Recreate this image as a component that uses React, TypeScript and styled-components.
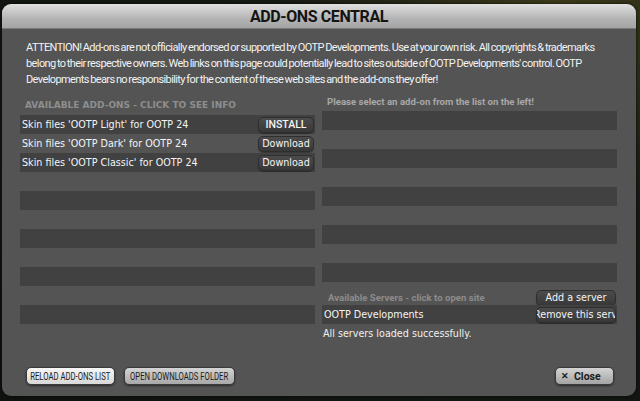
import styled, { createGlobalStyle } from "styled-components";

const GlobalStyle = createGlobalStyle`
  html, body {
    margin: 0;
    padding: 0;
    background: #121512;
  }
  * {
    box-sizing: border-box;
  }
`;

const addons = [
  { name: "Skin files 'OOTP Light' for OOTP 24", action: "INSTALL" },
  { name: "Skin files 'OOTP Dark' for OOTP 24", action: "Download" },
  { name: "Skin files 'OOTP Classic' for OOTP 24", action: "Download" },
];

const LEFT_ROWS = 12;
const RIGHT_ROWS = 9;

const App = () => {
  const leftRows = Array.from({ length: LEFT_ROWS }, (_, i) => addons[i]);

  return (
    <Page>
      <GlobalStyle />
      <Dialog>
        <Header>
          <Title>ADD-ONS CENTRAL</Title>
        </Header>
        <Body>
          <Notice>
            ATTENTION! Add-ons are not officially endorsed or supported by OOTP Developments. Use at your own risk. All
            copyrights &amp; trademarks belong to their respective owners. Web links on this page could potentially lead
            to sites outside of OOTP Developments' control. OOTP Developments bears no responsibility for the content of
            these web sites and the add-ons they offer!
          </Notice>
          <Columns>
            <Column>
              <LeftCaption>AVAILABLE ADD-ONS - CLICK TO SEE INFO</LeftCaption>
              <List>
                {leftRows.map((addon, i) => (
                  <Row key={i} $striped={i % 2 === 0}>
                    {addon && (
                      <>
                        <RowText>{addon.name}</RowText>
                        <RowButton $caps={addon.action === "INSTALL"}>{addon.action}</RowButton>
                      </>
                    )}
                  </Row>
                ))}
              </List>
            </Column>
            <Column>
              <RightCaption>Please select an add-on from the list on the left!</RightCaption>
              <List>
                {Array.from({ length: RIGHT_ROWS }, (_, i) => (
                  <Row key={i} $striped={i % 2 === 0} />
                ))}
              </List>
              <ServersHead>
                <ServersLabel>Available Servers - click to open site</ServersLabel>
                <ServerButton>
                  <span>Add a server</span>
                </ServerButton>
              </ServersHead>
              <Row $striped>
                <RowText>OOTP Developments</RowText>
                <ServerButton $overflow>
                  <span>Remove this server</span>
                </ServerButton>
              </Row>
              <Status>All servers loaded successfully.</Status>
            </Column>
          </Columns>
          <Footer>
            <FooterButton $tone="light" $width={89}>
              <Condensed>RELOAD ADD-ONS LIST</Condensed>
            </FooterButton>
            <FooterButton $tone="mid" $width={111}>
              <Condensed>OPEN DOWNLOADS FOLDER</Condensed>
            </FooterButton>
            <Spacer />
            <CloseButton>
              <CloseMark>✕</CloseMark>
              Close
            </CloseButton>
          </Footer>
        </Body>
      </Dialog>
    </Page>
  );
};

export default App;

const Page = styled.div`
  width: 640px;
  height: 401px;
  padding: 4px 4px 5px 2px;
  background: radial-gradient(ellipse at 88% 0%, #3c3a1a 0%, #161a14 35%, #0f120f 100%);
  overflow: hidden;
`;

const Dialog = styled.div`
  height: 100%;
  display: flex;
  flex-direction: column;
  border-radius: 9px;
  overflow: hidden;
  background: #545454;
  box-shadow: 0 0 3px rgba(0, 0, 0, 0.8);
`;

const Header = styled.header`
  height: 25px;
  flex: none;
  display: flex;
  align-items: center;
  justify-content: center;
  background: linear-gradient(#e0e0e0, #b4b4b4 60%, #a4a4a4);
  border-bottom: 1px solid #7a7a7a;
`;

const Title = styled.h1`
  margin: 0;
  font-family: Roboto, "Liberation Sans", sans-serif;
  font-size: 16px;
  font-weight: 700;
  letter-spacing: -0.4px;
  color: #141414;
`;

const Body = styled.main`
  flex: 1;
  display: flex;
  flex-direction: column;
  padding: 11px 19px 11px 18px;
`;

const Notice = styled.p`
  margin: 0 -8px 0 6px;
  font-family: Roboto, "Liberation Sans", sans-serif;
  font-size: 11px;
  letter-spacing: -0.6px;
  word-spacing: -0.8px;
  line-height: 16px;
  color: #f2f2f2;
`;

const Columns = styled.section`
  margin-top: 6px;
  display: flex;
  gap: 7px;
`;

const Column = styled.div`
  flex: 1;
  display: flex;
  flex-direction: column;
`;

const LeftCaption = styled.div`
  height: 21px;
  padding: 4px 0 0 5px;
  font-family: "DejaVu Sans", sans-serif;
  font-size: 9px;
  font-weight: 700;
  color: #8e8e8e;
  line-height: 14px;
  white-space: nowrap;
`;

const RightCaption = styled.div`
  height: 17px;
  padding: 1px 0 0 5px;
  font-family: Roboto, "Liberation Sans", sans-serif;
  font-size: 9.6px;
  font-weight: 700;
  color: #a8a8a8;
  line-height: 14px;
  white-space: nowrap;
`;

const List = styled.div`
  display: flex;
  flex-direction: column;
`;

const Row = styled.div<{ $striped?: boolean }>`
  height: 19px;
  display: flex;
  align-items: center;
  justify-content: space-between;
  padding: 0 1px 0 2px;
  background: ${(p) => (p.$striped ? "#414141" : "transparent")};
`;

const RowText = styled.span`
  font-family: "DejaVu Sans", sans-serif;
  font-size: 9.6px;
  color: #f4f4f4;
  white-space: nowrap;
`;

const RowButton = styled.button<{ $caps?: boolean }>`
  width: 56px;
  height: 16px;
  padding: 0;
  border: 1px solid #2e2e2e;
  border-radius: 5px;
  background: linear-gradient(#4c4c4c, #383838);
  box-shadow: 0 1px 1px rgba(0, 0, 0, 0.35);
  font-family: ${(p) => (p.$caps ? 'Roboto, "Liberation Sans", sans-serif' : '"DejaVu Sans", sans-serif')};
  font-size: ${(p) => (p.$caps ? "10.5px" : "9.6px")};
  font-weight: ${(p) => (p.$caps ? 500 : 400)};
  color: #f4f4f4;
`;

const ServersHead = styled.div`
  margin-top: 8px;
  height: 15px;
  display: flex;
  align-items: center;
  justify-content: space-between;
  padding: 0 1px 0 6px;
`;

const ServersLabel = styled.span`
  font-family: Roboto, "Liberation Sans", sans-serif;
  font-size: 9.6px;
  color: #8c8c8c;
  font-weight: 700;
`;

const ServerButton = styled.button<{ $overflow?: boolean }>`
  width: 80px;
  height: 16px;
  flex: none;
  display: flex;
  align-items: center;
  justify-content: ${(p) => (p.$overflow ? "flex-start" : "center")};
  padding: 0;
  border: 1px solid #2e2e2e;
  border-radius: 5px;
  background: linear-gradient(#4c4c4c, #383838);
  box-shadow: 0 1px 1px rgba(0, 0, 0, 0.35);
  font-family: "DejaVu Sans", sans-serif;
  font-size: 9.6px;
  color: #f4f4f4;
  white-space: nowrap;
  overflow: hidden;

  span {
    flex: none;
    margin-left: ${(p) => (p.$overflow ? "-3px" : "0")};
  }
`;

const Status = styled.div`
  margin-top: 3px;
  padding-left: 1px;
  font-family: "DejaVu Sans", sans-serif;
  font-size: 9.6px;
  line-height: 14px;
  color: #f0f0f0;
`;

const Footer = styled.footer`
  margin-top: auto;
  display: flex;
  align-items: center;
  gap: 9px;
  padding: 0 3px 0 6px;
`;

const Spacer = styled.div`
  flex: 1;
`;

const FooterButton = styled.button<{ $tone: "light" | "mid"; $width: number }>`
  width: ${(p) => p.$width}px;
  height: 18px;
  display: flex;
  align-items: center;
  justify-content: center;
  padding: 0;
  border: 1px solid #3a3a3a;
  border-radius: 5px;
  background: ${(p) =>
    p.$tone === "light"
      ? "linear-gradient(#f6f6f6, #d8d8d8)"
      : "linear-gradient(#d4d4d4, #a8a8a8)"};
  box-shadow: 0 1px 2px rgba(0, 0, 0, 0.5);
  font-family: Roboto, "Liberation Sans", sans-serif;
  font-size: 11px;
  color: #1c1c1c;
  white-space: nowrap;
`;

const Condensed = styled.span`
  flex: none;
  display: inline-block;
  transform: scaleX(0.7);
`;

const CloseButton = styled.button`
  width: 59px;
  height: 18px;
  display: flex;
  align-items: center;
  gap: 5px;
  padding: 0 0 0 5px;
  border: 1px solid #3a3a3a;
  border-radius: 5px;
  background: linear-gradient(#d4d4d4, #a4a4a4);
  box-shadow: 0 1px 2px rgba(0, 0, 0, 0.5);
  font-family: Roboto, "Liberation Sans", sans-serif;
  font-size: 10.5px;
  font-weight: 700;
  color: #1c1c1c;
`;

const CloseMark = styled.span`
  font-size: 9px;
  font-weight: 700;
`;
